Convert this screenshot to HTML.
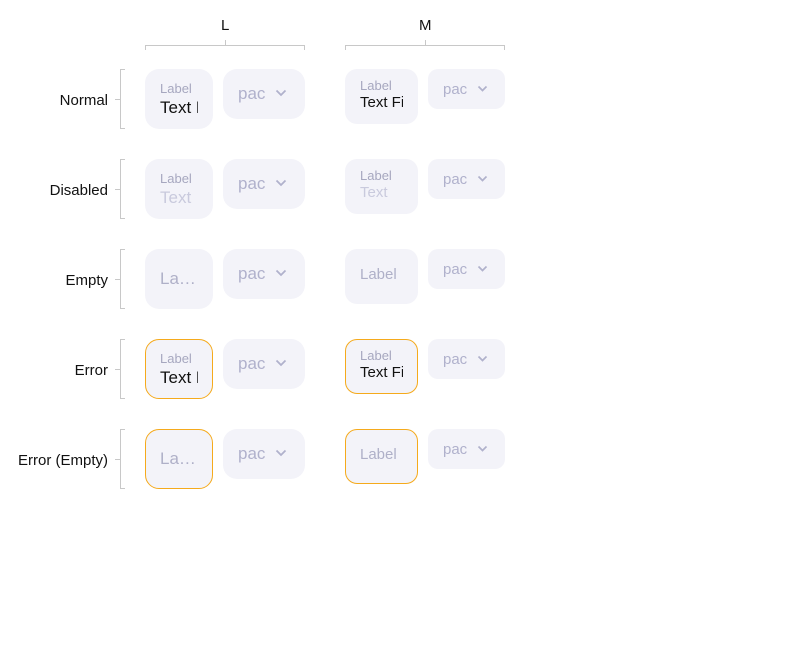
<!DOCTYPE html>
<html><head><meta charset="utf-8"><style>
body{margin:0;width:800px;height:664px;background:#fff;position:relative;font-family:"Liberation Sans",Roboto,sans-serif;overflow:hidden}
.a{position:absolute}
.rl{position:absolute;right:692px;font-size:15px;color:#111;white-space:nowrap;line-height:18px}
.b{position:absolute;background:#f3f3f9;box-sizing:border-box}
.err{border:1px solid #f5aa1c}
.lab{position:absolute;color:#a6a7bf;white-space:nowrap}
.val{position:absolute;color:#111;white-space:nowrap;overflow:hidden}
.pac{position:absolute;color:#b0b1cc;white-space:nowrap}
.chev{position:absolute}
.ln{position:absolute;background:#c8c8c8}
</style></head><body>

<div class="a" style="left:221px;top:17px;font-size:15px;color:#111">L</div>
<div class="a" style="left:419px;top:17px;font-size:15px;color:#111">M</div>
<div class="ln" style="left:145px;top:45px;width:160px;height:1px"></div>
<div class="ln" style="left:145px;top:45px;width:1px;height:5px"></div>
<div class="ln" style="left:304px;top:45px;width:1px;height:5px"></div>
<div class="ln" style="left:225px;top:40px;width:1px;height:5px"></div>
<div class="ln" style="left:345px;top:45px;width:160px;height:1px"></div>
<div class="ln" style="left:345px;top:45px;width:1px;height:5px"></div>
<div class="ln" style="left:504px;top:45px;width:1px;height:5px"></div>
<div class="ln" style="left:425px;top:40px;width:1px;height:5px"></div>

<div class="ln" style="left:120px;top:69px;width:1px;height:60px"></div><div class="ln" style="left:120px;top:69px;width:5px;height:1px"></div><div class="ln" style="left:120px;top:128px;width:5px;height:1px"></div><div class="ln" style="left:115px;top:99px;width:5px;height:1px"></div>
<div class="ln" style="left:120px;top:159px;width:1px;height:60px"></div><div class="ln" style="left:120px;top:159px;width:5px;height:1px"></div><div class="ln" style="left:120px;top:218px;width:5px;height:1px"></div><div class="ln" style="left:115px;top:189px;width:5px;height:1px"></div>
<div class="ln" style="left:120px;top:249px;width:1px;height:60px"></div><div class="ln" style="left:120px;top:249px;width:5px;height:1px"></div><div class="ln" style="left:120px;top:308px;width:5px;height:1px"></div><div class="ln" style="left:115px;top:279px;width:5px;height:1px"></div>
<div class="ln" style="left:120px;top:339px;width:1px;height:60px"></div><div class="ln" style="left:120px;top:339px;width:5px;height:1px"></div><div class="ln" style="left:120px;top:398px;width:5px;height:1px"></div><div class="ln" style="left:115px;top:369px;width:5px;height:1px"></div>
<div class="ln" style="left:120px;top:429px;width:1px;height:60px"></div><div class="ln" style="left:120px;top:429px;width:5px;height:1px"></div><div class="ln" style="left:120px;top:488px;width:5px;height:1px"></div><div class="ln" style="left:115px;top:459px;width:5px;height:1px"></div>

<div class="rl" style="top:92px">Normal</div>
<div class="rl" style="top:182px">Disabled</div>
<div class="rl" style="top:272px">Empty</div>
<div class="rl" style="top:362px">Error</div>
<div class="rl" style="top:452px">Error (Empty)</div>

<!-- Row 1 Normal -->
<div class="b" style="left:145px;top:69px;width:68px;height:60px;border-radius:14px">
 <div class="lab" style="left:15px;top:12px;font-size:13px">Label</div>
 <div class="val" style="left:15px;top:29px;width:38px;font-size:17px">Text Field</div></div>
<div class="b" style="left:223px;top:69px;width:82px;height:50px;border-radius:14px">
 <div class="pac" style="left:15px;top:15px;font-size:17px">pac</div>
 <svg class="chev" style="left:52px;top:20px" width="12" height="8"><path d="M1.5 1.5L6 6l4.5-4.5" fill="none" stroke="#b0b1cc" stroke-width="1.8"/></svg></div>
<div class="b" style="left:345px;top:69px;width:73px;height:55px;border-radius:12px">
 <div class="lab" style="left:15px;top:9px;font-size:13px">Label</div>
 <div class="val" style="left:15px;top:25px;width:43px;font-size:15px">Text Field</div></div>
<div class="b" style="left:428px;top:69px;width:77px;height:40px;border-radius:10px">
 <div class="pac" style="left:15px;top:12px;font-size:15px">pac</div>
 <svg class="chev" style="left:49px;top:16px" width="11" height="7"><path d="M1.5 1.5L5.5 5.5l4-4" fill="none" stroke="#b0b1cc" stroke-width="1.7"/></svg></div>

<!-- Row 2 Disabled -->
<div class="b" style="left:145px;top:159px;width:68px;height:60px;border-radius:14px">
 <div class="lab" style="left:15px;top:12px;font-size:13px">Label</div>
 <div class="val" style="left:15px;top:29px;width:38px;font-size:17px;color:#c9cadd">Text</div></div>
<div class="b" style="left:223px;top:159px;width:82px;height:50px;border-radius:14px">
 <div class="pac" style="left:15px;top:15px;font-size:17px">pac</div>
 <svg class="chev" style="left:52px;top:20px" width="12" height="8"><path d="M1.5 1.5L6 6l4.5-4.5" fill="none" stroke="#b0b1cc" stroke-width="1.8"/></svg></div>
<div class="b" style="left:345px;top:159px;width:73px;height:55px;border-radius:12px">
 <div class="lab" style="left:15px;top:9px;font-size:13px">Label</div>
 <div class="val" style="left:15px;top:25px;width:43px;font-size:15px;color:#c9cadd">Text</div></div>
<div class="b" style="left:428px;top:159px;width:77px;height:40px;border-radius:10px">
 <div class="pac" style="left:15px;top:12px;font-size:15px">pac</div>
 <svg class="chev" style="left:49px;top:16px" width="11" height="7"><path d="M1.5 1.5L5.5 5.5l4-4" fill="none" stroke="#b0b1cc" stroke-width="1.7"/></svg></div>

<!-- Row 3 Empty -->
<div class="b" style="left:145px;top:249px;width:68px;height:60px;border-radius:14px">
 <div class="lab" style="left:15px;top:20px;font-size:17px;color:#afb0c8">La…</div></div>
<div class="b" style="left:223px;top:249px;width:82px;height:50px;border-radius:14px">
 <div class="pac" style="left:15px;top:15px;font-size:17px">pac</div>
 <svg class="chev" style="left:52px;top:20px" width="12" height="8"><path d="M1.5 1.5L6 6l4.5-4.5" fill="none" stroke="#b0b1cc" stroke-width="1.8"/></svg></div>
<div class="b" style="left:345px;top:249px;width:73px;height:55px;border-radius:12px">
 <div class="lab" style="left:15px;top:17px;font-size:15px;color:#afb0c8">Label</div></div>
<div class="b" style="left:428px;top:249px;width:77px;height:40px;border-radius:10px">
 <div class="pac" style="left:15px;top:12px;font-size:15px">pac</div>
 <svg class="chev" style="left:49px;top:16px" width="11" height="7"><path d="M1.5 1.5L5.5 5.5l4-4" fill="none" stroke="#b0b1cc" stroke-width="1.7"/></svg></div>

<!-- Row 4 Error -->
<div class="b err" style="left:145px;top:339px;width:68px;height:60px;border-radius:14px">
 <div class="lab" style="left:14px;top:11px;font-size:13px">Label</div>
 <div class="val" style="left:14px;top:28px;width:38px;font-size:17px">Text Field</div></div>
<div class="b" style="left:223px;top:339px;width:82px;height:50px;border-radius:14px">
 <div class="pac" style="left:15px;top:15px;font-size:17px">pac</div>
 <svg class="chev" style="left:52px;top:20px" width="12" height="8"><path d="M1.5 1.5L6 6l4.5-4.5" fill="none" stroke="#b0b1cc" stroke-width="1.8"/></svg></div>
<div class="b err" style="left:345px;top:339px;width:73px;height:55px;border-radius:12px">
 <div class="lab" style="left:14px;top:8px;font-size:13px">Label</div>
 <div class="val" style="left:14px;top:24px;width:43px;font-size:15px">Text Field</div></div>
<div class="b" style="left:428px;top:339px;width:77px;height:40px;border-radius:10px">
 <div class="pac" style="left:15px;top:12px;font-size:15px">pac</div>
 <svg class="chev" style="left:49px;top:16px" width="11" height="7"><path d="M1.5 1.5L5.5 5.5l4-4" fill="none" stroke="#b0b1cc" stroke-width="1.7"/></svg></div>

<!-- Row 5 Error Empty -->
<div class="b err" style="left:145px;top:429px;width:68px;height:60px;border-radius:14px">
 <div class="lab" style="left:14px;top:19px;font-size:17px;color:#afb0c8">La…</div></div>
<div class="b" style="left:223px;top:429px;width:82px;height:50px;border-radius:14px">
 <div class="pac" style="left:15px;top:15px;font-size:17px">pac</div>
 <svg class="chev" style="left:52px;top:20px" width="12" height="8"><path d="M1.5 1.5L6 6l4.5-4.5" fill="none" stroke="#b0b1cc" stroke-width="1.8"/></svg></div>
<div class="b err" style="left:345px;top:429px;width:73px;height:55px;border-radius:12px">
 <div class="lab" style="left:14px;top:16px;font-size:15px;color:#afb0c8">Label</div></div>
<div class="b" style="left:428px;top:429px;width:77px;height:40px;border-radius:10px">
 <div class="pac" style="left:15px;top:12px;font-size:15px">pac</div>
 <svg class="chev" style="left:49px;top:16px" width="11" height="7"><path d="M1.5 1.5L5.5 5.5l4-4" fill="none" stroke="#b0b1cc" stroke-width="1.7"/></svg></div>

</body></html>
